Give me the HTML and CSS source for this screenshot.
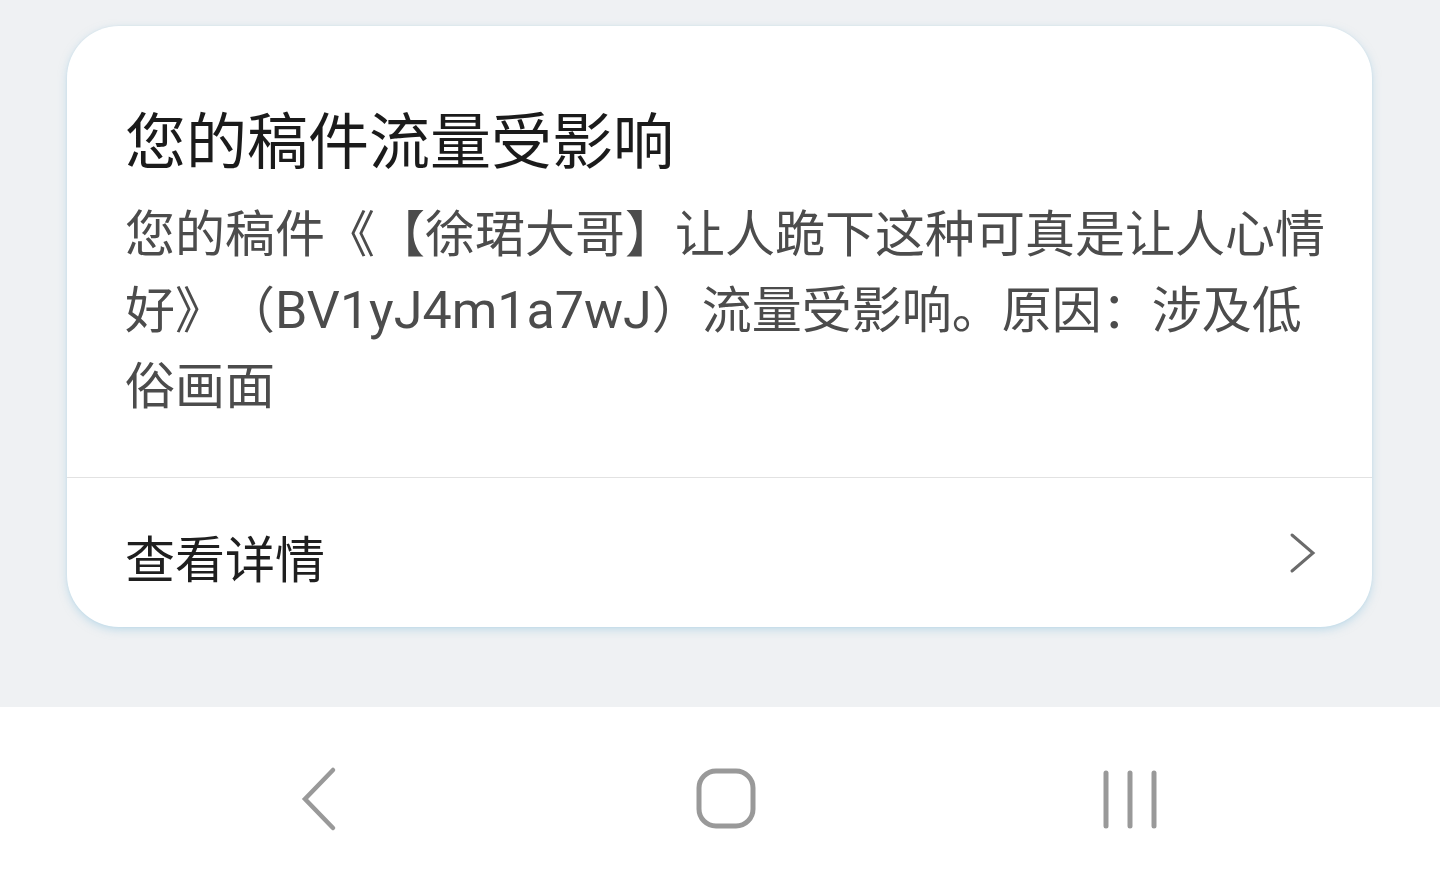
FILE: index.html
```html
<!DOCTYPE html>
<html lang="zh-CN">
<head>
<meta charset="utf-8">
<link rel="stylesheet" href="styles.css">
<title>通知</title>
</head>
<body>
<main class="screen">
  <section class="card">
    <div class="card-body">
      <h1 class="title">您的稿件流量受影响</h1>
      <p class="desc">您的稿件《【徐珺大哥】让人跪下这种可真是让人心情好》（<span class="code">BV1yJ4m1a7wJ</span>）流量受影响。原因：涉及低俗画面</p>
    </div>
    <div class="card-footer">
      <span class="link">查看详情</span>
      <svg class="chev" width="30" height="44" viewBox="0 0 30 44"><path d="M4 4 L25 22 L4 40" fill="none" stroke="#6b6b6b" stroke-width="3" stroke-linecap="round" stroke-linejoin="miter"/></svg>
    </div>
  </section>
</main>
<nav class="navbar">
  <svg class="nav-icon" width="80" height="70" viewBox="0 0 80 70"><path d="M55 7 L27 36 L55 65" fill="none" stroke="#999" stroke-width="4.5" stroke-linecap="round" stroke-linejoin="miter"/></svg>
  <svg class="nav-icon" width="80" height="70" viewBox="0 0 80 70"><rect x="15" y="8" width="54" height="55" rx="17" fill="none" stroke="#999" stroke-width="5"/></svg>
  <svg class="nav-icon" width="80" height="70" viewBox="0 0 80 70"><g stroke="#999" stroke-width="5" stroke-linecap="round"><line x1="16" y1="10" x2="16" y2="63"/><line x1="40" y1="10" x2="40" y2="63"/><line x1="64" y1="10" x2="64" y2="63"/></g></svg>
</nav>
</body>
</html>
```

FILE: styles.css
```css
html, body {
  margin: 0;
  padding: 0;
}
body {
  width: 1440px;
  height: 887px;
  overflow: hidden;
  background: #eff1f3;
  font-family: "Noto Sans CJK SC", "Noto Sans", sans-serif;
  text-spacing-trim: space-all;
}
.screen {
  height: 707px;
  box-sizing: border-box;
  padding: 26px 68px 0 67px;
  background: #eff1f3;
}
.card {
  background: #fff;
  border-radius: 52px;
  box-shadow: 0 3px 9px rgba(150, 200, 225, 0.5), 0 0 2px rgba(180, 210, 225, 0.4);
  overflow: hidden;
}
.card-body {
  padding: 72px 40px 57px 58px;
}
.title {
  margin: 0;
  font-size: 61px;
  line-height: 80px;
  font-weight: 400;
  color: #1b1b1b;
}
.desc {
  margin: 14px 0 0;
  font-size: 50px;
  line-height: 76px;
  color: #4c4c4c;
  text-spacing-trim: space-all;
}
.code {
  font-family: Roboto, "Noto Sans", sans-serif;
  font-size: 52px;
  line-height: 40px;
}
.card-footer {
  border-top: 1px solid #e2e2e2;
  height: 149px;
  display: flex;
  align-items: center;
  justify-content: space-between;
  padding: 0 54px 0 58px;
}
.link {
  font-size: 50px;
  color: #1f1f1f;
  padding-top: 6px;
}
.chev {
  display: block;
}
.navbar {
  height: 180px;
  background: #fff;
  display: flex;
  align-items: center;
  gap: 326px;
  padding-left: 278px;
  box-sizing: border-box;
}
.nav-icon {
  display: block;
  flex: none;
  margin-top: 2px;
}
```
